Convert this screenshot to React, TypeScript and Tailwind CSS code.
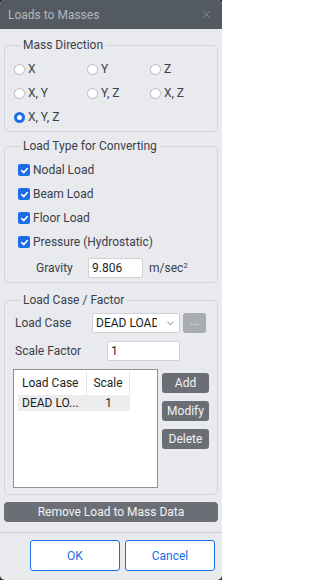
import { ChevronDown, X } from "lucide-react";

const font = { fontFamily: "Roboto, 'Noto Sans', sans-serif" };

const Radio = ({ label, checked = false }: { label: string; checked?: boolean }) => (
  <div className="flex items-center h-[24px]">
    {checked ? (
      <span className="w-[11px] h-[11px] rounded-full border-[3px] border-[#1a6fe8] bg-white" />
    ) : (
      <span className="w-[11px] h-[11px] rounded-full border border-[#b4b7bc] bg-white" />
    )}
    <span className="ml-[3px] text-[12px] text-[#3b404a]">{label}</span>
  </div>
);

const Check = ({ label }: { label: string }) => (
  <div className="flex items-center h-[24px] pl-[4px]">
    <span className="w-[12px] h-[12px] rounded-[2px] bg-[#1a6fe8] flex items-center justify-center">
      <svg width="9" height="9" viewBox="0 0 10 10">
        <path d="M2 5.2 L4.2 7.3 L8 3" fill="none" stroke="white" strokeWidth="1.8" strokeLinecap="round" strokeLinejoin="round" />
      </svg>
    </span>
    <span className="ml-[3px] text-[12px] text-[#3b404a]">{label}</span>
  </div>
);

const GrayButton = ({ label }: { label: string }) => (
  <button className="w-[47px] h-[20px] rounded-[3px] bg-[#6b6f75] text-[12px] text-[#f2f3f5] flex items-center justify-center">
    {label}
  </button>
);

export default function App() {
  return (
    <div className="w-[222px] h-[580px] bg-[#2c3034]" style={font}>
      <div className="h-full flex flex-col rounded-[5px] overflow-hidden bg-[#e9eaed]">
        <div className="h-[29px] shrink-0 bg-[#545a61] flex items-center justify-between pl-[8px] pr-[9px]">
          <span className="text-[12px] text-[#b3b8bd]">Loads to Masses</span>
          <X className="w-[13px] h-[13px] text-[#8e949a]" strokeWidth={1.5} />
        </div>

        <div className="px-[4px] pt-[8px]">
          <fieldset className="border border-[#d2d4d8] rounded-[5px] pl-[9px] pr-[4px] pt-[4px] pb-[2px]">
            <legend className="ml-[6px] px-[3px] text-[12px] leading-[16px] text-[#3b404a]">Mass Direction</legend>
            <div className="grid grid-cols-[73px_63px_1fr]">
              <Radio label="X" />
              <Radio label="Y" />
              <Radio label="Z" />
              <Radio label="X, Y" />
              <Radio label="Y, Z" />
              <Radio label="X, Z" />
              <Radio label="X, Y, Z" checked />
            </div>
          </fieldset>

          <fieldset className="mt-[6px] border border-[#d2d4d8] rounded-[5px] pl-[9px] pr-[4px] pt-[4px] pb-[4px]">
            <legend className="ml-[6px] px-[3px] text-[12px] leading-[16px] text-[#3b404a]">Load Type for Converting</legend>
            <Check label="Nodal Load" />
            <Check label="Beam Load" />
            <Check label="Floor Load" />
            <Check label="Pressure (Hydrostatic)" />
            <div className="mt-[4px] flex items-center h-[20px]">
              <span className="ml-[22px] w-[52px] text-[12px] text-[#3b404a]">Gravity</span>
              <div className="w-[55px] h-[20px] bg-white border border-[#cfd1d5] rounded-[2px] flex items-center px-[3px] text-[12px] text-[#1d1f23]">
                9.806
              </div>
              <span className="ml-[6px] text-[12px] text-[#3b404a]">
                m/sec<sup className="text-[8px]">2</sup>
              </span>
            </div>
          </fieldset>

          <fieldset className="mt-[9px] border border-[#d2d4d8] rounded-[5px] pl-[8px] pr-[6px] pt-[5px] pb-[6px]">
            <legend className="ml-[7px] px-[3px] text-[12px] leading-[16px] text-[#3b404a]">Load Case / Factor</legend>
            <div className="flex items-center h-[20px]">
              <span className="ml-[2px] w-[77px] text-[12px] text-[#3b404a]">Load Case</span>
              <div className="w-[88px] h-[20px] bg-white border border-[#cfd1d5] rounded-[2px] flex items-center pl-[3px] pr-[3px]">
                <span className="w-[61px] overflow-hidden whitespace-nowrap text-[12px] text-[#1d1f23]">DEAD LOAD</span>
                <ChevronDown className="ml-auto w-[11px] h-[11px] text-[#6a6e74] shrink-0" strokeWidth={2} />
              </div>
              <button className="ml-[3px] w-[23px] h-[20px] rounded-[3px] bg-[#a9acb1] text-[11px] text-[#eef0f2] leading-none pb-[3px]">
                ...
              </button>
            </div>
            <div className="mt-[8px] flex items-center h-[20px]">
              <span className="ml-[2px] w-[92px] text-[12px] text-[#3b404a]">Scale Factor</span>
              <div className="w-[73px] h-[20px] bg-white border border-[#cfd1d5] rounded-[2px] flex items-center px-[3px] text-[12px] text-[#1d1f23]">
                1
              </div>
            </div>
            <div className="mt-[8px] flex">
              <div className="w-[145px] h-[119px] bg-white border border-[#8e9196] pl-[4px] pt-[1px]">
                <div className="flex h-[24px] text-[12px] text-[#1d1f23]">
                  <div className="w-[69px] pl-[4px] flex items-center border-r border-[#e6e7e9]">Load Case</div>
                  <div className="w-[43px] flex items-center justify-center border-r border-[#e6e7e9]">Scale</div>
                </div>
                <div className="flex h-[16px] w-[112px] bg-[#ececee] text-[12px] text-[#1d1f23]">
                  <div className="w-[69px] pl-[4px] flex items-center">DEAD LO...</div>
                  <div className="w-[43px] flex items-center justify-center">1</div>
                </div>
              </div>
              <div className="ml-[4px] pt-[4px] flex flex-col gap-[8px]">
                <GrayButton label="Add" />
                <GrayButton label="Modify" />
                <GrayButton label="Delete" />
              </div>
            </div>
          </fieldset>

          <button className="mt-[7px] w-full h-[20px] rounded-[4px] bg-[#6b6f75] text-[12px] text-[#f2f3f5] flex items-center justify-center">
            Remove Load to Mass Data
          </button>
        </div>

        <div className="mt-[10px] border-t border-[#c9cbcf]" />
        <div className="mt-[7px] flex justify-end gap-[5px] pr-[7px]">
          <button className="w-[90px] h-[31px] rounded-[3px] bg-white border border-[#1a6fe8] text-[12px] text-[#1a6fe8]">OK</button>
          <button className="w-[90px] h-[31px] rounded-[3px] bg-white border border-[#1a6fe8] text-[12px] text-[#1a6fe8]">Cancel</button>
        </div>
      </div>
    </div>
  );
}
